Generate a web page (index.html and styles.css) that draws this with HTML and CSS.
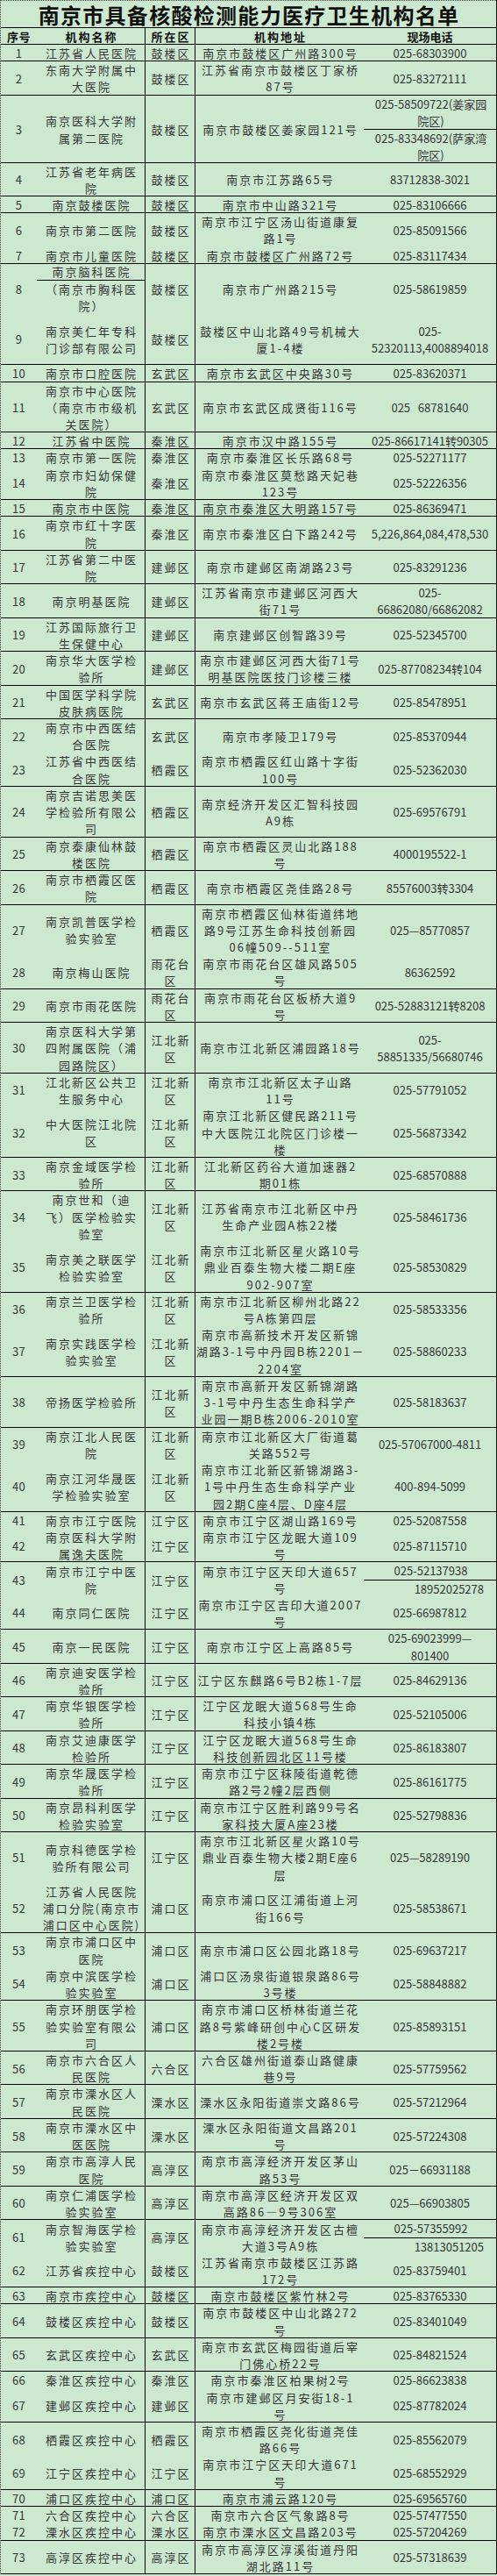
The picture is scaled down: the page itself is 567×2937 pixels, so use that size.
FILE: index.html
```html
<!DOCTYPE html>
<html lang="zh-CN">
<head>
<meta charset="utf-8">
<title>南京市具备核酸检测能力医疗卫生机构名单</title>
<link rel="stylesheet" href="styles.css">
</head>
<body>
<div class="sheet">
  <div class="title">南京市具备核酸检测能力医疗卫生机构名单</div>
  <div class="row head">
    <div class="c no">序号</div><div class="c name">机构名称</div><div class="c dist">所在区</div><div class="c addr">机构地址</div><div class="c tel">现场电话</div>
  </div>

  <div class="row u1"><div class="c no">1</div><div class="c name">江苏省人民医院</div><div class="c dist">鼓楼区</div><div class="c addr">南京市鼓楼区广州路300号</div><div class="c tel">025-68303900</div></div>
  <div class="row u2"><div class="c no">2</div><div class="c name">东南大学附属中<br>大医院</div><div class="c dist">鼓楼区</div><div class="c addr">江苏省南京市鼓楼区丁家桥<br>87号</div><div class="c tel">025-83272111</div></div>
  <div class="row u4"><div class="c no">3</div><div class="c name">南京医科大学附<br>属第二医院</div><div class="c dist">鼓楼区</div><div class="c addr">南京市鼓楼区姜家园121号</div><div class="c tel split"><div class="part top">025-58509722(姜家园<br>院区)</div><div class="part">025-83348692(萨家湾<br>院区)</div></div></div>
  <div class="row u2"><div class="c no">4</div><div class="c name">江苏省老年病医<br>院</div><div class="c dist">鼓楼区</div><div class="c addr">南京市江苏路65号</div><div class="c tel">83712838-3021</div></div>
  <div class="row u1"><div class="c no">5</div><div class="c name">南京鼓楼医院</div><div class="c dist">鼓楼区</div><div class="c addr">南京市中山路321号</div><div class="c tel">025-83106666</div></div>
  <div class="row u2 nb"><div class="c no">6</div><div class="c name">南京市第二医院</div><div class="c dist">鼓楼区</div><div class="c addr">南京市江宁区汤山街道康复<br>路1号</div><div class="c tel">025-85091566</div></div>
  <div class="row u1"><div class="c no">7</div><div class="c name">南京市儿童医院</div><div class="c dist">鼓楼区</div><div class="c addr">南京市鼓楼区广州路72号</div><div class="c tel">025-83117434</div></div>
  <div class="row u3 nb"><div class="c no">8</div><div class="c name split"><div class="part top one">南京脑科医院</div><div class="part">（南京市胸科医<br>院）</div></div><div class="c dist">鼓楼区</div><div class="c addr">南京市广州路215号</div><div class="c tel">025-58619859</div></div>
  <div class="row u3"><div class="c no">9</div><div class="c name">南京美仁年专科<br>门诊部有限公司</div><div class="c dist">鼓楼区</div><div class="c addr">鼓楼区中山北路49号机械大<br>厦1-4楼</div><div class="c tel">025-<br>52320113,4008894018</div></div>
  <div class="row u1"><div class="c no">10</div><div class="c name">南京市口腔医院</div><div class="c dist">玄武区</div><div class="c addr">南京市玄武区中央路30号</div><div class="c tel">025-83620371</div></div>
  <div class="row u3"><div class="c no">11</div><div class="c name">南京市中心医院<br>（南京市市级机<br>关医院）</div><div class="c dist">玄武区</div><div class="c addr">南京市玄武区成贤街116号</div><div class="c tel">025&nbsp;&nbsp;&nbsp;68781640</div></div>
  <div class="row u1"><div class="c no">12</div><div class="c name">江苏省中医院</div><div class="c dist">秦淮区</div><div class="c addr">南京市汉中路155号</div><div class="c tel">025-86617141转90305</div></div>
  <div class="row u1 nb"><div class="c no">13</div><div class="c name">南京市第一医院</div><div class="c dist">秦淮区</div><div class="c addr">南京市秦淮区长乐路68号</div><div class="c tel">025-52271177</div></div>
  <div class="row u2"><div class="c no">14</div><div class="c name">南京市妇幼保健<br>院</div><div class="c dist">秦淮区</div><div class="c addr">南京市秦淮区莫愁路天妃巷<br>123号</div><div class="c tel">025-52226356</div></div>
  <div class="row u1"><div class="c no">15</div><div class="c name">南京市中医院</div><div class="c dist">秦淮区</div><div class="c addr">南京市秦淮区大明路157号</div><div class="c tel">025-86369471</div></div>
  <div class="row u2"><div class="c no">16</div><div class="c name">南京市红十字医<br>院</div><div class="c dist">秦淮区</div><div class="c addr">南京市秦淮区白下路242号</div><div class="c tel">5,226,864,084,478,530</div></div>
  <div class="row u2"><div class="c no">17</div><div class="c name">江苏省第二中医<br>院</div><div class="c dist">建邺区</div><div class="c addr">南京市建邺区南湖路23号</div><div class="c tel">025-83291236</div></div>
  <div class="row u2"><div class="c no">18</div><div class="c name">南京明基医院</div><div class="c dist">建邺区</div><div class="c addr">江苏省南京市建邺区河西大<br>街71号</div><div class="c tel">025-<br>66862080/66862082</div></div>
  <div class="row u2"><div class="c no">19</div><div class="c name">江苏国际旅行卫<br>生保健中心</div><div class="c dist">建邺区</div><div class="c addr">南京建邺区创智路39号</div><div class="c tel">025-52345700</div></div>
  <div class="row u2"><div class="c no">20</div><div class="c name">南京华大医学检<br>验所</div><div class="c dist">建邺区</div><div class="c addr">南京市建邺区河西大街71号<br>明基医院医技门诊楼三楼</div><div class="c tel">025-87708234转104</div></div>
  <div class="row u2"><div class="c no">21</div><div class="c name">中国医学科学院<br>皮肤病医院</div><div class="c dist">玄武区</div><div class="c addr">南京市玄武区蒋王庙街12号</div><div class="c tel">025-85478951</div></div>
  <div class="row u2 nb"><div class="c no">22</div><div class="c name">南京市中西医结<br>合医院</div><div class="c dist">玄武区</div><div class="c addr">南京市孝陵卫179号</div><div class="c tel">025-85370944</div></div>
  <div class="row u2"><div class="c no">23</div><div class="c name">江苏省中西医结<br>合医院</div><div class="c dist">栖霞区</div><div class="c addr">南京市栖霞区红山路十字街<br>100号</div><div class="c tel">025-52362030</div></div>
  <div class="row u3"><div class="c no">24</div><div class="c name">南京吉诺思美医<br>学检验所有限公<br>司</div><div class="c dist">栖霞区</div><div class="c addr">南京经济开发区汇智科技园<br>A9栋</div><div class="c tel">025-69576791</div></div>
  <div class="row u2"><div class="c no">25</div><div class="c name">南京泰康仙林鼓<br>楼医院</div><div class="c dist">栖霞区</div><div class="c addr">南京市栖霞区灵山北路188<br>号</div><div class="c tel">4000195522-1</div></div>
  <div class="row u2"><div class="c no">26</div><div class="c name">南京市栖霞区医<br>院</div><div class="c dist">栖霞区</div><div class="c addr">南京市栖霞区尧佳路28号</div><div class="c tel">85576003转3304</div></div>
  <div class="row u3 nb"><div class="c no">27</div><div class="c name">南京凯普医学检<br>验实验室</div><div class="c dist">栖霞区</div><div class="c addr">南京市栖霞区仙林街道纬地<br>路9号江苏生命科技创新园<br>06幢509--511室</div><div class="c tel">025—85770857</div></div>
  <div class="row u2"><div class="c no">28</div><div class="c name">南京梅山医院</div><div class="c dist">雨花台<br>区</div><div class="c addr">南京市雨花台区雄风路505<br>号</div><div class="c tel">86362592</div></div>
  <div class="row u2"><div class="c no">29</div><div class="c name">南京市雨花医院</div><div class="c dist">雨花台<br>区</div><div class="c addr">南京市雨花台区板桥大道9<br>号</div><div class="c tel">025-52883121转8208</div></div>
  <div class="row u3"><div class="c no">30</div><div class="c name">南京医科大学第<br>四附属医院（浦<br>园路院区）</div><div class="c dist">江北新<br>区</div><div class="c addr">南京市江北新区浦园路18号</div><div class="c tel">025-<br>58851335/56680746</div></div>
  <div class="row u2 nb"><div class="c no">31</div><div class="c name">江北新区公共卫<br>生服务中心</div><div class="c dist">江北新<br>区</div><div class="c addr">南京市江北新区太子山路<br>11号</div><div class="c tel">025-57791052</div></div>
  <div class="row u3"><div class="c no">32</div><div class="c name">中大医院江北院<br>区</div><div class="c dist">江北新<br>区</div><div class="c addr">南京江北新区健民路211号<br>中大医院江北院区门诊楼一<br>楼</div><div class="c tel">025-56873342</div></div>
  <div class="row u2"><div class="c no">33</div><div class="c name">南京金域医学检<br>验所</div><div class="c dist">江北新<br>区</div><div class="c addr">江北新区药谷大道加速器2<br>期01栋</div><div class="c tel">025-68570888</div></div>
  <div class="row u3 nb"><div class="c no">34</div><div class="c name">南京世和（迪<br>飞）医学检验实<br>验室</div><div class="c dist">江北新<br>区</div><div class="c addr">江苏省南京市江北新区中丹<br>生命产业园A栋22楼</div><div class="c tel">025-58461736</div></div>
  <div class="row u3"><div class="c no">35</div><div class="c name">南京美之联医学<br>检验实验室</div><div class="c dist">江北新<br>区</div><div class="c addr">南京市江北新区星火路10号<br>鼎业百泰生物大楼二期E座<br>902-907室</div><div class="c tel">025-58530829</div></div>
  <div class="row u2 nb"><div class="c no">36</div><div class="c name">南京兰卫医学检<br>验所</div><div class="c dist">江北新<br>区</div><div class="c addr">南京市江北新区柳州北路22<br>号A栋第四层</div><div class="c tel">025-58533356</div></div>
  <div class="row u3"><div class="c no">37</div><div class="c name">南京实践医学检<br>验实验室</div><div class="c dist">江北新<br>区</div><div class="c addr">南京市高新技术开发区新锦<br>湖路3-1号中丹园B栋2201－<br>2204室</div><div class="c tel">025-58860233</div></div>
  <div class="row u3"><div class="c no">38</div><div class="c name">帝扬医学检验所</div><div class="c dist">江北新<br>区</div><div class="c addr">南京市高新开发区新锦湖路<br>3-1号中丹生态生命科学产<br>业园一期B栋2006-2010室</div><div class="c tel">025-58183637</div></div>
  <div class="row u2 nb"><div class="c no">39</div><div class="c name">南京江北人民医<br>院</div><div class="c dist">江北新<br>区</div><div class="c addr">南京市江北新区大厂街道葛<br>关路552号</div><div class="c tel">025-57067000-4811</div></div>
  <div class="row u3"><div class="c no">40</div><div class="c name">南京江河华晟医<br>学检验实验室</div><div class="c dist">江北新<br>区</div><div class="c addr">南京市江北新区新锦湖路3-<br>1号中丹生态生命科学产业<br>园2期C座4层、D座4层</div><div class="c tel">400-894-5099</div></div>
  <div class="row u1 nb"><div class="c no">41</div><div class="c name">南京市江宁医院</div><div class="c dist">江宁区</div><div class="c addr">南京市江宁区湖山路169号</div><div class="c tel">025-52087558</div></div>
  <div class="row u2"><div class="c no">42</div><div class="c name">南京医科大学附<br>属逸夫医院</div><div class="c dist">江宁区</div><div class="c addr">南京市江宁区龙眠大道109<br>号</div><div class="c tel">025-87115710</div></div>
  <div class="row u2 nb"><div class="c no">43</div><div class="c name">南京市江宁中医<br>院</div><div class="c dist">江宁区</div><div class="c addr">南京市江宁区天印大道657<br>号</div><div class="c tel split"><div class="part top">025-52137938</div><div class="part r">18952025278</div></div></div>
  <div class="row u2"><div class="c no">44</div><div class="c name">南京同仁医院</div><div class="c dist">江宁区</div><div class="c addr">南京市江宁区吉印大道2007<br>号</div><div class="c tel">025-66987812</div></div>
  <div class="row u2"><div class="c no">45</div><div class="c name">南京一民医院</div><div class="c dist">江宁区</div><div class="c addr">南京市江宁区上高路85号</div><div class="c tel">025-69023999—<br>801400</div></div>
  <div class="row u2"><div class="c no">46</div><div class="c name">南京迪安医学检<br>验所</div><div class="c dist">江宁区</div><div class="c addr">江宁区东麒路6号B2栋1-7层</div><div class="c tel">025-84629136</div></div>
  <div class="row u2"><div class="c no">47</div><div class="c name">南京华银医学检<br>验所</div><div class="c dist">江宁区</div><div class="c addr">江宁区龙眠大道568号生命<br>科技小镇4栋</div><div class="c tel">025-52105006</div></div>
  <div class="row u2"><div class="c no">48</div><div class="c name">南京艾迪康医学<br>检验所</div><div class="c dist">江宁区</div><div class="c addr">江宁区龙眠大道568号生命<br>科技创新园北区11号楼</div><div class="c tel">025-86183807</div></div>
  <div class="row u2"><div class="c no">49</div><div class="c name">南京华晟医学检<br>验所</div><div class="c dist">江宁区</div><div class="c addr">南京市江宁区秣陵街道乾德<br>路2号2幢2层西侧</div><div class="c tel">025-86161775</div></div>
  <div class="row u2"><div class="c no">50</div><div class="c name">南京昂科利医学<br>检验实验室</div><div class="c dist">江宁区</div><div class="c addr">南京市江宁区胜利路99号名<br>家科技大厦A座23楼</div><div class="c tel">025-52798836</div></div>
  <div class="row u3 nb"><div class="c no">51</div><div class="c name">南京科德医学检<br>验所有限公司</div><div class="c dist">江宁区</div><div class="c addr">南京市江北新区星火路10号<br>鼎业百泰生物大楼2期E座6<br>层</div><div class="c tel">025—58289190</div></div>
  <div class="row u3"><div class="c no">52</div><div class="c name">江苏省人民医院<br>浦口分院(南京市<br>浦口区中心医院)</div><div class="c dist">浦口区</div><div class="c addr">南京市浦口区江浦街道上河<br>街166号</div><div class="c tel">025-58538671</div></div>
  <div class="row u2 nb"><div class="c no">53</div><div class="c name">南京市浦口区中<br>医院</div><div class="c dist">浦口区</div><div class="c addr">南京市浦口区公园北路18号</div><div class="c tel">025-69637217</div></div>
  <div class="row u2"><div class="c no">54</div><div class="c name">南京中滨医学检<br>验实验室</div><div class="c dist">浦口区</div><div class="c addr">浦口区汤泉街道银泉路86号<br>3号楼</div><div class="c tel">025-58848882</div></div>
  <div class="row u3"><div class="c no">55</div><div class="c name">南京环朋医学检<br>验实验室有限公<br>司</div><div class="c dist">浦口区</div><div class="c addr">南京市浦口区桥林街道兰花<br>路8号紫峰研创中心C区研发<br>楼2号楼</div><div class="c tel">025-85893151</div></div>
  <div class="row u2"><div class="c no">56</div><div class="c name">南京市六合区人<br>民医院</div><div class="c dist">六合区</div><div class="c addr">六合区雄州街道泰山路健康<br>巷9号</div><div class="c tel">025-57759562</div></div>
  <div class="row u2"><div class="c no">57</div><div class="c name">南京市溧水区人<br>民医院</div><div class="c dist">溧水区</div><div class="c addr">溧水区永阳街道崇文路86号</div><div class="c tel">025-57212964</div></div>
  <div class="row u2"><div class="c no">58</div><div class="c name">南京市溧水区中<br>医医院</div><div class="c dist">溧水区</div><div class="c addr">溧水区永阳街道文昌路201<br>号</div><div class="c tel">025-57224308</div></div>
  <div class="row u2"><div class="c no">59</div><div class="c name">南京市高淳人民<br>医院</div><div class="c dist">高淳区</div><div class="c addr">南京市高淳经济开发区茅山<br>路53号</div><div class="c tel">025－66931188</div></div>
  <div class="row u2"><div class="c no">60</div><div class="c name">南京仁浦医学检<br>验实验室</div><div class="c dist">高淳区</div><div class="c addr">南京市高淳区经济开发区双<br>高路86—9号306室</div><div class="c tel">025—66903805</div></div>
  <div class="row u2 nb"><div class="c no">61</div><div class="c name">南京智海医学检<br>验实验室</div><div class="c dist">高淳区</div><div class="c addr">南京市高淳经济开发区古檀<br>大道3号A9栋</div><div class="c tel split"><div class="part top">025-57355992</div><div class="part r">13813051205</div></div></div>
  <div class="row u2"><div class="c no">62</div><div class="c name">江苏省疾控中心</div><div class="c dist">鼓楼区</div><div class="c addr">江苏省南京市鼓楼区江苏路<br>172号</div><div class="c tel">025-83759401</div></div>
  <div class="row u1"><div class="c no">63</div><div class="c name">南京市疾控中心</div><div class="c dist">鼓楼区</div><div class="c addr">南京市鼓楼区紫竹林2号</div><div class="c tel">025-83765330</div></div>
  <div class="row u2"><div class="c no">64</div><div class="c name">鼓楼区疾控中心</div><div class="c dist">鼓楼区</div><div class="c addr">南京市鼓楼区中山北路272<br>号</div><div class="c tel">025-83401049</div></div>
  <div class="row u2"><div class="c no">65</div><div class="c name">玄武区疾控中心</div><div class="c dist">玄武区</div><div class="c addr">南京市玄武区梅园街道后宰<br>门佛心桥22号</div><div class="c tel">025-84821524</div></div>
  <div class="row u1 nb"><div class="c no">66</div><div class="c name">秦淮区疾控中心</div><div class="c dist">秦淮区</div><div class="c addr">南京市秦淮区柏果树2号</div><div class="c tel">025-86623838</div></div>
  <div class="row u2"><div class="c no">67</div><div class="c name">建邺区疾控中心</div><div class="c dist">建邺区</div><div class="c addr">南京市建邺区月安街18-1<br>号</div><div class="c tel">025-87782024</div></div>
  <div class="row u2 nb"><div class="c no">68</div><div class="c name">栖霞区疾控中心</div><div class="c dist">栖霞区</div><div class="c addr">南京市栖霞区尧化街道尧佳<br>路66号</div><div class="c tel">025-85562079</div></div>
  <div class="row u2"><div class="c no">69</div><div class="c name">江宁区疾控中心</div><div class="c dist">江宁区</div><div class="c addr">南京市江宁区天印大道671<br>号</div><div class="c tel">025-68552929</div></div>
  <div class="row u1"><div class="c no">70</div><div class="c name">浦口区疾控中心</div><div class="c dist">浦口区</div><div class="c addr">南京市浦云路120号</div><div class="c tel">025-69565760</div></div>
  <div class="row u1 nb"><div class="c no">71</div><div class="c name">六合区疾控中心</div><div class="c dist">六合区</div><div class="c addr">南京市六合区气象路8号</div><div class="c tel">025-57477550</div></div>
  <div class="row u1"><div class="c no">72</div><div class="c name">溧水区疾控中心</div><div class="c dist">溧水区</div><div class="c addr">南京市溧水区文昌路203号</div><div class="c tel">025-57204269</div></div>
  <div class="row u2"><div class="c no">73</div><div class="c name">高淳区疾控中心</div><div class="c dist">高淳区</div><div class="c addr">南京市高淳区淳溪街道丹阳<br>湖北路11号</div><div class="c tel">025-57318639</div></div>
</div>
</body>
</html>
```

FILE: styles.css
```css
html, body {
  margin: 0;
  padding: 0;
}

body {
  background: #cce8cf;
  color: #363636;
  font-family: "Noto Sans CJK SC", "Liberation Sans", sans-serif;
}

.sheet {
  --u: 19.23px;
  width: 567px;
  box-sizing: border-box;
  border-left: 1px dotted #444;
  border-right: 1px solid #111;
}

.title {
  height: 32px;
  box-sizing: border-box;
  border-top: 1px dotted #444;
  border-bottom: 1px solid #000;
  display: flex;
  align-items: center;
  justify-content: center;
  font-size: 24px;
  font-weight: bold;
  letter-spacing: 1.3px;
  color: #111;
  white-space: nowrap;
  padding-left: 1px;
}

.row {
  display: grid;
  grid-template-columns: 41px 124px 57px 192px 151px;
  box-sizing: border-box;
  border-bottom: 1px solid #000;
}

.row.nb {
  border-bottom: none;
}

.head {
  height: 19px;
}

.u1 { height: var(--u); }
.u2 { height: calc(var(--u) * 2); }
.u3 { height: calc(var(--u) * 3); }
.u4 { height: calc(var(--u) * 4); }

.c {
  display: flex;
  flex-direction: column;
  justify-content: center;
  align-items: center;
  text-align: center;
  box-sizing: border-box;
  min-width: 0;
  font-size: 13px;
  line-height: var(--u);
  letter-spacing: 2px;
  white-space: nowrap;
  padding-left: 2px;
}

.head .c {
  font-weight: bold;
  color: #111;
}

.no {
  letter-spacing: 0.4px;
  padding-left: 0;
}

.name,
.dist {
  border-right: 1px solid #000;
}

.tel {
  letter-spacing: 0;
  padding-left: 0;
}

.c.split {
  justify-content: stretch;
  align-items: stretch;
  padding-left: 0;
}

.part {
  flex: 1;
  display: flex;
  flex-direction: column;
  align-items: center;
  justify-content: center;
  padding-left: 2px;
}

.part.top {
  border-bottom: 1px solid #000;
}

.part.one {
  flex: none;
  height: var(--u);
  box-sizing: border-box;
}

.part.r {
  align-items: flex-end;
  padding-right: 14px;
}
```
